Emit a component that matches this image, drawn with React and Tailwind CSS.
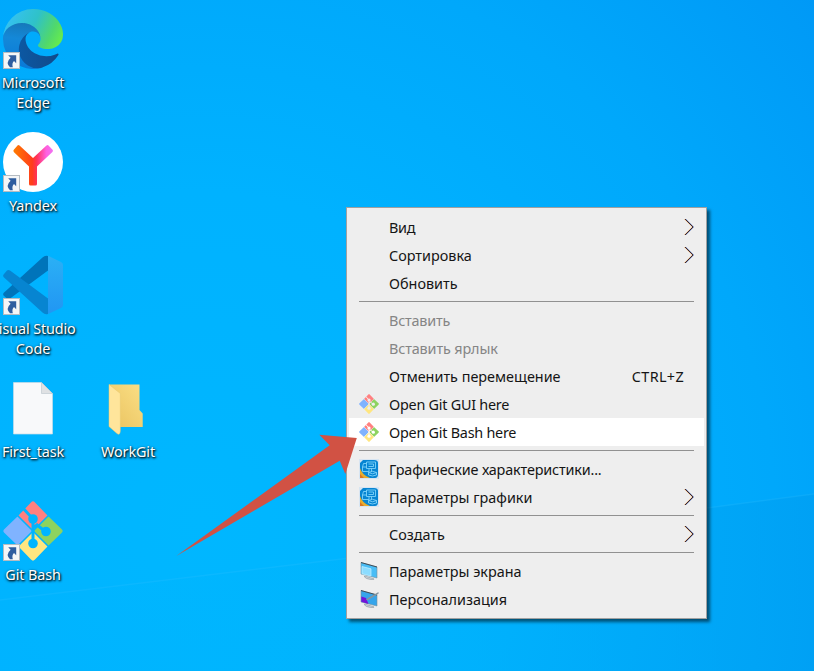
import React from 'react';

const GitIcon = ({ id, className, gap = 1.6 }) => (
  <svg viewBox="0 0 60 60" className={className}>
    <mask id={id}>
      <rect width="60" height="60" fill="#fff" />
      <g stroke="#000" fill="none" strokeWidth={gap}>
        <path d="M13 13 47 47M47 13 13 47" />
        <path d="M19 6 30 18V43M30 27 34 24 43 31" strokeWidth="3" />
      </g>
      <circle cx="30" cy="18" r="4.8" />
      <circle cx="43" cy="30.5" r="4.8" />
      <circle cx="30" cy="42.5" r="4.8" />
    </mask>
    <g mask={`url(#${id})`}>
      <path d="M30 30 15 15 28 1.5Q30-.8 32 1.5L45 15Z" fill="#ff8080" />
      <path d="M30 30 15 45 1.5 32Q-.8 30 1.5 28L15 15Z" fill="#80b3ff" />
      <path d="M30 30 45 15 58.5 28Q60.8 30 58.5 32L45 45Z" fill="#8dd35f" />
      <path d="M30 30 45 45 32 58.5Q30 60.8 28 58.5L15 45Z" fill="#ffe680" />
    </g>
  </svg>
);

const EdgeIcon = () => (
  <svg viewBox="4.6 4.9 256 256" className="size-[60px]">
    <defs>
      <linearGradient id="e1" x1="63" y1="177" x2="241" y2="177" gradientUnits="userSpaceOnUse"><stop stopColor="#0c59a4" /><stop offset="1" stopColor="#114a8b" /></linearGradient>
      <linearGradient id="e2" x1="90" y1="60" x2="70" y2="240" gradientUnits="userSpaceOnUse"><stop stopColor="#1677b8" /><stop offset=".4" stopColor="#1488d8" /><stop offset="1" stopColor="#0a7bd8" /></linearGradient>
      <linearGradient id="e3" x1="30" y1="40" x2="245" y2="150" gradientUnits="userSpaceOnUse"><stop stopColor="#35c1f1" /><stop offset=".45" stopColor="#2fc2c8" /><stop offset=".8" stopColor="#50d86c" /><stop offset="1" stopColor="#66eb4e" /></linearGradient>
    </defs>
    <path fill="url(#e1)" d="M235.68 195.49a93.73 93.73 0 01-10.54 4.71 101.87 101.87 0 01-35.9 6.46c-47.32 0-88.54-32.55-88.54-74.32A31.48 31.48 0 01117.13 105c-42.8 1.8-53.8 46.4-53.8 72.53 0 73.88 68.09 81.37 82.76 81.37 7.91 0 19.84-2.3 27-4.56l1.31-.44a128.34 128.34 0 0066.6-52.8 4 4 0 00-5.32-5.61z" />
    <path fill="url(#e2)" d="M110.34 246.34A79.2 79.2 0 0187.6 225a80.72 80.72 0 0129.53-120c3.12-1.47 8.45-4.13 15.54-4a32.35 32.35 0 0125.69 13 31.88 31.88 0 016.36 18.66c0-.21 24.46-79.6-80-79.6-43.9 0-80 41.66-80 78.21a130.15 130.15 0 0012.11 56 128 128 0 00156.38 67.11 75.55 75.55 0 01-62.78-8z" />
    <path fill="url(#e3)" d="M156.94 153.78c-.81 1.05-3.3 2.5-3.3 5.66 0 2.61 1.7 5.12 4.72 7.23 14.38 10 41.49 8.68 41.56 8.68a59.56 59.56 0 0030.27-8.35 61.38 61.38 0 0030.43-52.88c.26-22.41-8-37.31-11.34-43.91C228.09 28.76 182.35 4.92 132.63 4.92a128 128 0 00-128 126.2c.48-36.54 36.8-66.05 80-66.05 3.5 0 23.46.34 42 10.07 16.34 8.58 24.9 18.94 30.85 29.21 6.18 10.67 7.28 24.15 7.28 29.52s-2.74 13.33-7.82 19.91z" />
  </svg>
);

const YandexIcon = () => (
  <svg viewBox="0 0 60 60" className="size-[60px]">
    <defs>
      <linearGradient id="y1" x1="11" y1="16" x2="49" y2="16" gradientUnits="userSpaceOnUse"><stop stopColor="#ff7a00" /><stop offset=".48" stopColor="#ff3d1c" /><stop offset=".6" stopColor="#ff335a" /><stop offset=".85" stopColor="#ff60e0" /><stop offset="1" stopColor="#f070f0" /></linearGradient>
    </defs>
    <circle cx="30" cy="30" r="30" fill="#fff" />
    <path d="M10.6 18 14.5 13.4Q15.5 12.6 16.5 13.5L30 26 43.5 13.5Q44.5 12.6 45.5 13.4L49.8 18Q50.2 19 49.4 20L34 34.5V52Q34 53.5 32.5 53.5H27.5Q26 53.5 26 52V34.5L11 20.3Q10 19 10.6 18Z" fill="url(#y1)" />
  </svg>
);

const CodeIcon = () => (
  <svg viewBox="0 0 60 60" className="size-[60px]">
    <defs>
      <linearGradient id="v1" x1="0" y1="0" x2="0" y2="1"><stop stopColor="#2bb0f5" /><stop offset="1" stopColor="#2196f3" /></linearGradient>
    </defs>
    <path d="M45 1Q42 0 39.5 2.5L.8 37.8Q-.5 39.3.8 40.8L4 43.5Q5.5 44.5 7 43.4L45 15.5Z" fill="#0074ba" />
    <path d="M45 59Q42 60 39.5 57.5L.8 22.2Q-.5 20.7.8 19.2L4 15.5Q5.5 14.5 7 15.6L45 43.5Z" fill="#0785d1" />
    <path d="M45 .8 58 7Q60 8 60 10V50Q60 52 58 53L45 59Z" fill="url(#v1)" />
  </svg>
);

const FileIcon = () => (
  <svg viewBox="0 0 60 60" className="size-[60px]">
    <path d="M10.5 4.5H38.5L49.5 15.5V56H10.5Z" fill="#f8f9fa" stroke="#c9dbe6" strokeWidth=".7" />
    <path d="M38.5 4.5V15.5H49.5Z" fill="#dfe1e3" stroke="#b9c3c9" strokeWidth=".6" />
  </svg>
);

const FolderIcon = () => (
  <svg viewBox="0 0 60 60" className="size-[60px]">
    <defs>
      <linearGradient id="f1" x1="0" y1="1" x2="1" y2="0"><stop stopColor="#e9c25f" /><stop offset="1" stopColor="#fbdf85" /></linearGradient>
    </defs>
    <path d="M11 6.5H41.5V32L44.7 35.5V49H21L11 40Z" fill="url(#f1)" />
    <path d="M11 6.5 22.3 15.5V53Q21.8 58 19 55.5L11 48.5Z" fill="#ffe59b" stroke="#e9c86f" strokeWidth=".5" />
  </svg>
);

const ShortcutBadge = () => (
  <svg viewBox="0 0 17 17" className="absolute bottom-0 left-0 size-[17px]">
    <rect x=".5" y=".5" width="16" height="16" fill="#f5f6f7" stroke="#b5bcc2" />
    <path d="M5.2 3.2H13.2V11.2L11 9Q8.6 11.2 9.8 15.2H7Q2.2 10.6 7.6 5.7Z" fill="#2f5d9f" />
  </svg>
);

const DesktopItem = ({ place, lines, shortcut, children }) => (
  <div className={`absolute flex w-[110px] flex-col items-center ${place}`}>
    <div className="relative size-[60px]">
      {children}
      {shortcut && <ShortcutBadge />}
    </div>
    <div className="mt-1 flex flex-col items-center text-[14.4px] leading-5 tracking-[-0.12px] text-white [text-shadow:1px_1px_2px_#000,0_1px_3px_#000b]">
      {lines.map((text) => <span key={text} className="whitespace-nowrap">{text}</span>)}
    </div>
  </div>
);

const GraphicsIcon = () => (
  <svg viewBox="0 0 20 20" className="size-5">
    <rect width="20" height="20" fill="#d7e5f2" />
    <path d="M4 1H15Q19 1 19 4V15Q19 19 16 19H4Q1 16 1 12V4Z" fill="#0785d2" />
    <path d="M1 9Q3 16 11 19H1Z" fill="#e8ad2e" />
    <path d="M1 15 5 19H1Z" fill="#dc7620" />
    <g fill="none" stroke="#8bdcff" strokeWidth=".8">
      <path d="M7.5 3H16.5V9.5H7.5ZM9.5 5H14.5V7.5H9.5M7.5 4.5H4.5L3.5 8V12.5H10V9.5M12.5 9.5V12.5M3.5 8H7.5" />
      <path d="M9.5 13.5Q13.5 11 17.5 13.5V16Q13.5 18 9.5 16ZM9.5 13.5Q13.5 16 17.5 13.5" />
    </g>
  </svg>
);

const ScreenIcon = ({ pen }) => (
  <svg viewBox="0 0 20 20" className="size-5">
    <path d="M5.5 15 14 17.5Q17 18.5 12 18.5 7 18 5.5 16Z" fill="#cbd3d8" stroke="#7d8990" strokeWidth=".5" />
    <path d="M2 1.5 18 6V17L2 13Z" fill={pen ? '#35a5eb' : '#49bdf6'} stroke="#78909c" strokeWidth=".6" />
    <path d="M2 1.5 18 6" stroke="#34444f" strokeWidth=".9" />
    {pen ? (
      <>
        <path d="M2.3 7.5 7 9 9.5 15 2.3 12.7Z" fill="#7413d8" />
        <path d="M19.5 3 9 9 6.5 11.3 9.5 10.7 19.5 4.8Z" fill="#87959d" />
      </>
    ) : (
      <path d="M3 5.5 12 7.8V15L3 12.8Z" fill="#8bdcff" stroke="#c8f0ff" strokeWidth=".7" />
    )}
  </svg>
);

const Chevron = () => (
  <svg viewBox="0 0 10 18" className="ml-auto mr-[10px] h-[18px] w-[10px]" fill="none" strokeWidth=".75">
    <path d="M.4 1 8.4 9 .4 17" stroke="#e8a75c" />
    <path d="M1.6 1 9.6 9 1.6 17" stroke="#3a5fae" />
    <path d="M1 1 9 9 1 17" stroke="#33191d" strokeWidth=".9" />
  </svg>
);

const Row = ({ label, spacing = '', icon, arrow, disabled, active, keys }) => (
  <div className={`flex h-7 items-center ${active ? 'bg-white' : ''} ${disabled ? 'text-[#858585]' : 'text-[#151515]'}`}>
    <div className="flex w-10 shrink-0 pl-[10px]">{icon}</div>
    <span className={`whitespace-nowrap pt-[2px] ${spacing}`}>{label}</span>
    {keys && <span className="ml-auto mr-5 pt-[2px] tracking-[0.35px]">{keys}</span>}
    {arrow && <Chevron />}
  </div>
);

const Separator = () => (
  <div className="flex h-[9px] items-center pl-[10px] pr-[10px]"><div className="h-px w-full bg-[#919191]" /></div>
);

export default function App() {
  return (
    <main className="relative h-[671px] w-[814px] overflow-hidden bg-[#00b3ff] font-['Noto_Sans','Open_Sans',sans-serif]">
      <svg viewBox="0 0 814 671" className="absolute inset-0 size-full">
        <defs>
          <radialGradient id="sky" cx="200" cy="520" r="820" gradientUnits="userSpaceOnUse">
            <stop stopColor="#00b7ff" /><stop offset=".4" stopColor="#00b2ff" /><stop offset=".7" stopColor="#00a8fb" /><stop offset="1" stopColor="#0098f6" />
          </radialGradient>
          <linearGradient id="ray" x1="0" y1="0" x2="1" y2="0"><stop stopColor="#00b5fb" stopOpacity="0" /><stop offset=".5" stopColor="#00b3fb" stopOpacity=".4" /><stop offset="1" stopColor="#009ff2" stopOpacity=".7" /></linearGradient>
        </defs>
        <rect width="814" height="671" fill="url(#sky)" />
        <path d="M0 600 350 558 707 508 814 494V671H0Z" fill="url(#ray)" />
        <path d="M0 600 350 558 707 508 814 494" fill="none" stroke="#37c3ff" strokeOpacity=".2" strokeWidth="1.5" />
      </svg>

      <DesktopItem place="left-[-22px] top-[9px]" lines={['Microsoft', 'Edge']} shortcut><EdgeIcon /></DesktopItem>
      <DesktopItem place="left-[-22px] top-[132px]" lines={['Yandex']} shortcut><YandexIcon /></DesktopItem>
      <DesktopItem place="left-[-22px] top-[255px]" lines={['Visual Studio', 'Code']} shortcut><CodeIcon /></DesktopItem>
      <DesktopItem place="left-[-22px] top-[378px]" lines={['First_task']}><FileIcon /></DesktopItem>
      <DesktopItem place="left-[73px] top-[378px]" lines={['WorkGit']}><FolderIcon /></DesktopItem>
      <DesktopItem place="left-[-22px] top-[501px]" lines={['Git Bash']} shortcut><GitIcon id="gd" className="size-[60px]" /></DesktopItem>

      <div className="absolute left-[346px] top-[207px] flex h-[412px] w-[361px] flex-col border border-[#a0a0a0] bg-[#eeeeee] px-[2px] py-[5px] text-[14.4px] shadow-[3px_3px_3px_#0008]">
        <Row label="Вид" spacing="tracking-[-0.3px]" arrow />
        <Row label="Сортировка" arrow />
        <Row label="Обновить" />
        <Separator />
        <Row label="Вставить" spacing="tracking-[-0.2px]" disabled />
        <Row label="Вставить ярлык" spacing="tracking-[-0.13px]" disabled />
        <Row label="Отменить перемещение" keys="CTRL+Z" />
        <Row label="Open Git GUI here" spacing="tracking-[-0.25px]" icon={<GitIcon id="gm1" gap={1} className="size-5" />} />
        <Row label="Open Git Bash here" spacing="tracking-[-0.25px]" icon={<GitIcon id="gm2" gap={1} className="size-5" />} active />
        <Separator />
        <Row label="Графические характеристики..." spacing="tracking-[-0.17px]" icon={<GraphicsIcon />} />
        <Row label="Параметры графики" icon={<GraphicsIcon />} arrow />
        <Separator />
        <Row label="Создать" arrow />
        <Separator />
        <Row label="Параметры экрана" icon={<ScreenIcon />} />
        <Row label="Персонализация" icon={<ScreenIcon pen />} />
      </div>

      <svg viewBox="0 0 814 671" className="pointer-events-none absolute inset-0 size-full">
        <path d="M356.8 438 319.3 434.7 329.7 445.3 176.3 556 339.7 460.7 345.3 474Z" fill="#d15244" />
      </svg>
    </main>
  );
}
